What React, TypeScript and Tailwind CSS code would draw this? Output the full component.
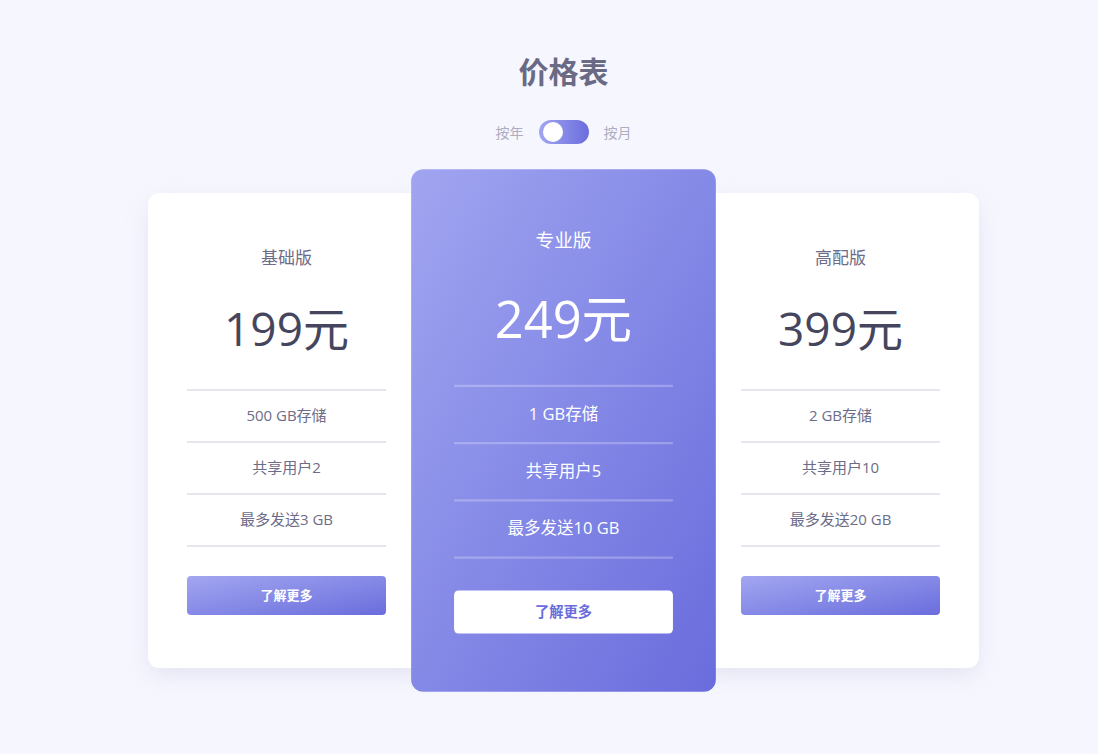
import { useState } from 'react';

type Plan = {
    name: string;
    price: string;
    features: string[];
    featured?: boolean;
};

const plans: Plan[] = [
    { name: '基础版', price: '199', features: ['500 GB存储', '共享用户2', '最多发送3 GB'] },
    { name: '专业版', price: '249', features: ['1 GB存储', '共享用户5', '最多发送10 GB'], featured: true },
    { name: '高配版', price: '399', features: ['2 GB存储', '共享用户10', '最多发送20 GB'] },
];

function PlanCard({ plan }: { plan: Plan }) {
    const hot = plan.featured;
    return (
        <div
            className={
                hot
                    ? 'relative z-10 w-[277px] scale-110 rounded-[11px] bg-gradient-to-br from-[#a1a5f0] to-[#6a6cdc] px-[39px] pt-[53px] pb-[53px] text-center text-white'
                    : 'w-[277px] rounded-[11px] bg-white px-[39px] pt-[53px] pb-[53px] text-center shadow-[0_8px_24px_rgba(120,120,170,0.14)]'
            }
        >
            <h2 className={`text-[17px] leading-6 ${hot ? 'text-white' : 'text-[#6d6c88]'}`}>{plan.name}</h2>
            <p className={`mt-[34px] text-[46px] leading-[48px] ${hot ? 'text-white' : 'text-[#45455e]'}`}>
                {plan.price}元
            </p>
            <ul className={`mt-[37px] border-t-2 ${hot ? 'border-white/25' : 'border-[#e6e6ee]'}`}>
                {plan.features.map((f) => (
                    <li
                        key={f}
                        className={`flex h-[52px] items-center justify-center border-b-2 pb-[2px] text-[15px] ${
                            hot ? 'border-white/25 text-white' : 'border-[#e6e6ee] text-[#6d6c88]'
                        }`}
                    >
                        {f}
                    </li>
                ))}
            </ul>
            <button
                className={
                    hot
                        ? 'mt-[29px] h-[39px] w-full rounded-[4px] bg-white text-[13px] font-bold text-[#6a6cdc]'
                        : 'mt-[29px] h-[39px] w-full rounded-[4px] bg-gradient-to-br from-[#a3a6f0] to-[#6b6ddc] text-[13px] font-bold text-white'
                }
            >
                了解更多
            </button>
        </div>
    );
}

export default function App() {
    const [monthly, setMonthly] = useState(false);

    return (
        <div
            className="min-h-screen bg-[#f6f7fe] pl-[29px] pt-[52px]"
            style={{ fontFamily: '"Open Sans", "Noto Sans CJK SC", sans-serif' }}
        >
            <div className="flex flex-col items-center">
                <h1 className="text-[30px] font-bold leading-10 text-[#6b6a85]">价格表</h1>

                <div className="mt-[28px] flex items-center gap-[15px] text-[14px] text-[#aeacc0]">
                    <span>按年</span>
                    <button
                        onClick={() => setMonthly(!monthly)}
                        className="flex h-[24px] w-[50px] items-center rounded-full bg-gradient-to-r from-[#a2a5f0] to-[#6b6ddc] px-[3px]"
                    >
                        <span
                            className={`h-[20px] w-[20px] rounded-full bg-white transition-transform ${monthly ? 'translate-x-[24px]' : 'translate-x-[1px]'}`}
                        />
                    </button>
                    <span>按月</span>
                </div>

                <div className="mt-[49px] flex items-center">
                    {plans.map((p) => (
                        <PlanCard key={p.name} plan={p} />
                    ))}
                </div>
            </div>
        </div>
    );
}
